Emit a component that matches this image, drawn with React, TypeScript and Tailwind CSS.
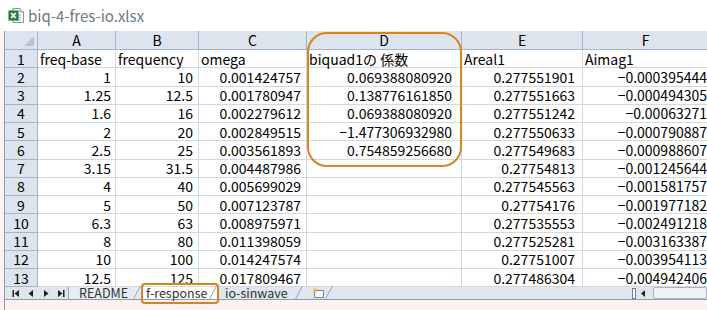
import React from 'react';

const cols = [33, 78, 83, 108, 155, 121, 126];
const letters = ['A', 'B', 'C', 'D', 'E', 'F'];

const rows: string[][] = [
  ['freq-base', 'frequency', 'omega', 'biquad1の 係数', 'Areal1', 'Aimag1'],
  ['1', '10', '0.001424757', '0.069388080920', '0.277551901', '−0.000395444'],
  ['1.25', '12.5', '0.001780947', '0.138776161850', '0.277551663', '−0.000494305'],
  ['1.6', '16', '0.002279612', '0.069388080920', '0.277551242', '−0.00063271'],
  ['2', '20', '0.002849515', '−1.477306932980', '0.277550633', '−0.000790887'],
  ['2.5', '25', '0.003561893', '0.754859256680', '0.277549683', '−0.000988607'],
  ['3.15', '31.5', '0.004487986', '', '0.27754813', '−0.001245644'],
  ['4', '40', '0.005699029', '', '0.277545563', '−0.001581757'],
  ['5', '50', '0.007123787', '', '0.27754176', '−0.001977182'],
  ['6.3', '63', '0.008975971', '', '0.277535553', '−0.002491218'],
  ['8', '80', '0.011398059', '', '0.277525281', '−0.003163387'],
  ['10', '100', '0.014247574', '', '0.27751007', '−0.003954113'],
  ['12.5', '125', '0.017809467', '', '0.277486304', '−0.004942406'],
];

// right padding per column (numbers sit a bit further in for D and E)
const padR = ['pr-[4px]', 'pr-[5px]', 'pr-[5px]', 'pr-[9px]', 'pr-[7px]', 'pr-[1px]'];

const font = { fontFamily: '"Noto Sans CJK JP", "Liberation Sans", sans-serif' };

const ExcelIcon = () => (
  <svg width="17" height="17" viewBox="0 0 17 17">
    <path d="M5 1.5h7l3.5 3.5v10.5H5z" fill="#fff" stroke="#7d93ad" />
    <path d="M12 1.5v3.5h3.5" fill="#e8eef5" stroke="#7d93ad" />
    <path d="M7 8h6M7 10.5h6M7 13h6" stroke="#9fb3c8" />
    <rect x="1" y="4" width="9" height="9" fill="#2f8a3e" stroke="#1f6a2c" />
    <path d="M3.2 6l4.6 5M7.8 6l-4.6 5" stroke="#fff" strokeWidth="1.6" />
  </svg>
);

const NavButtons = () => (
  <div className="w-[63px] flex items-center gap-[7px] pl-[7px] h-full shrink-0">
    <svg width="8" height="9" viewBox="0 0 8 9"><rect x="0.5" y="1" width="1.5" height="7" fill="#222" /><path d="M7 1v7L2.5 4.5z" fill="#222" /></svg>
    <svg width="8" height="9" viewBox="0 0 8 9"><path d="M6 1v7L1.5 4.5z" fill="#222" /></svg>
    <svg width="8" height="9" viewBox="0 0 8 9"><path d="M2 1v7l4.5-3.5z" fill="#222" /></svg>
    <svg width="8" height="9" viewBox="0 0 8 9"><path d="M1 1v7l4.5-3.5z" fill="#222" /><rect x="6" y="1" width="1.5" height="7" fill="#222" /></svg>
  </div>
);

const Slant = () => (
  <svg className="absolute right-0 bottom-0" width="8" height="13" viewBox="0 0 8 13">
    <path d="M0.5 13L7.5 0" stroke="#9aa8b8" />
  </svg>
);

export default function App() {
  return (
    <div className="w-[707px] h-[310px] bg-[#fcf2f2] overflow-hidden flex flex-col" style={font}>
      {/* title */}
      <div className="h-[31px] bg-white flex items-center gap-[3px] pl-[8px] shrink-0">
        <ExcelIcon />
        <span className="text-[15px] text-[#6b7888] leading-none">biq-4-fres-io.xlsx</span>
      </div>

      <div className="relative flex-1 ml-[4px] border-l border-[#8c9aab] overflow-hidden">
        {/* sheet grid */}
        <div
          className="grid bg-white text-[14px] text-black leading-[14px]"
          style={{ gridTemplateColumns: cols.map((c) => `${c}px`).join(' ') }}
        >
          <div className="h-[19px] bg-[#dde4ee] border-r border-b border-[#9eb6ce] relative">
            <svg className="absolute right-[3px] bottom-[3px]" width="10" height="10" viewBox="0 0 10 10">
              <path d="M10 0v10H0z" fill="#b9c4d2" />
            </svg>
          </div>
          {letters.map((l) => (
            <div
              key={l}
              className="h-[19px] bg-[#dde4ee] border-r border-b border-[#9eb6ce] flex items-center justify-center"
            >
              {l}
            </div>
          ))}
          {rows.map((r, i) => (
            <React.Fragment key={i}>
              <div className="h-[18.25px] bg-[#dde4ee] border-r border-b border-[#9eb6ce] flex items-center justify-center">
                {i + 1}
              </div>
              {r.map((v, j) => (
                <div
                  key={j}
                  className={`h-[18.25px] border-r border-b border-[#d0d7e5] flex items-center whitespace-nowrap ${
                    i === 0 ? 'justify-start pl-[2px]' : `justify-end ${padR[j]}`
                  }`}
                >
                  {v}
                </div>
              ))}
            </React.Fragment>
          ))}
        </div>

        {/* sheet tabs */}
        <div className="h-[13px] flex items-stretch bg-[#dfe6ee] border-b border-[#8c9aab] text-[12.5px] text-[#333] leading-[12px]">
          <NavButtons />
          <div className="flex items-stretch border-l border-[#9aa8b8]">
            <div className="relative w-[72px] flex items-center pl-[10px] bg-[#e7ecf2]">
              <span>README</span>
              <Slant />
            </div>
            <div className="relative w-[76px] flex items-center pl-[5px] bg-white">
              <span>f-response</span>
              <Slant />
            </div>
            <div className="relative w-[86px] flex items-center pl-[8px]">
              <span>io-sinwave</span>
              <Slant />
            </div>
            <div className="relative w-[30px] flex items-center pl-[8px]">
              <svg width="14" height="12" viewBox="0 0 14 12">
                <path d="M3.5 3.5h9v7h-9z" fill="#f4f7fb" stroke="#6f88a6" />
                <path d="M4 0.5l1 2 2 0-1.5 1.3.5 2L4 4.6l-2 1.2.5-2L1 2.5h2z" fill="#f2b33d" />
              </svg>
              <Slant />
            </div>
          </div>
          <div className="flex-1" />
          <div className="flex items-center gap-[4px]">
            <div className="w-[4px] h-[11px] border border-[#6f7f93] bg-white" />
            <svg width="6" height="9" viewBox="0 0 6 9"><path d="M5 1v7L1 4.5z" fill="#222" /></svg>
            <div className="w-[54px] h-[12px] border border-[#a9b5c3] rounded-[2px] bg-[#eef2f6] ml-[3px]" />
          </div>
        </div>

        {/* annotations */}
        <div className="absolute left-[302px] top-[1px] w-[155px] h-[135px] border-2 border-[#d9831f] rounded-[20px] pointer-events-none" />
        <div className="absolute left-[136px] top-[252px] w-[78px] h-[21px] border-2 border-[#d9831f] rounded-[4px] pointer-events-none" />
      </div>
    </div>
  );
}
